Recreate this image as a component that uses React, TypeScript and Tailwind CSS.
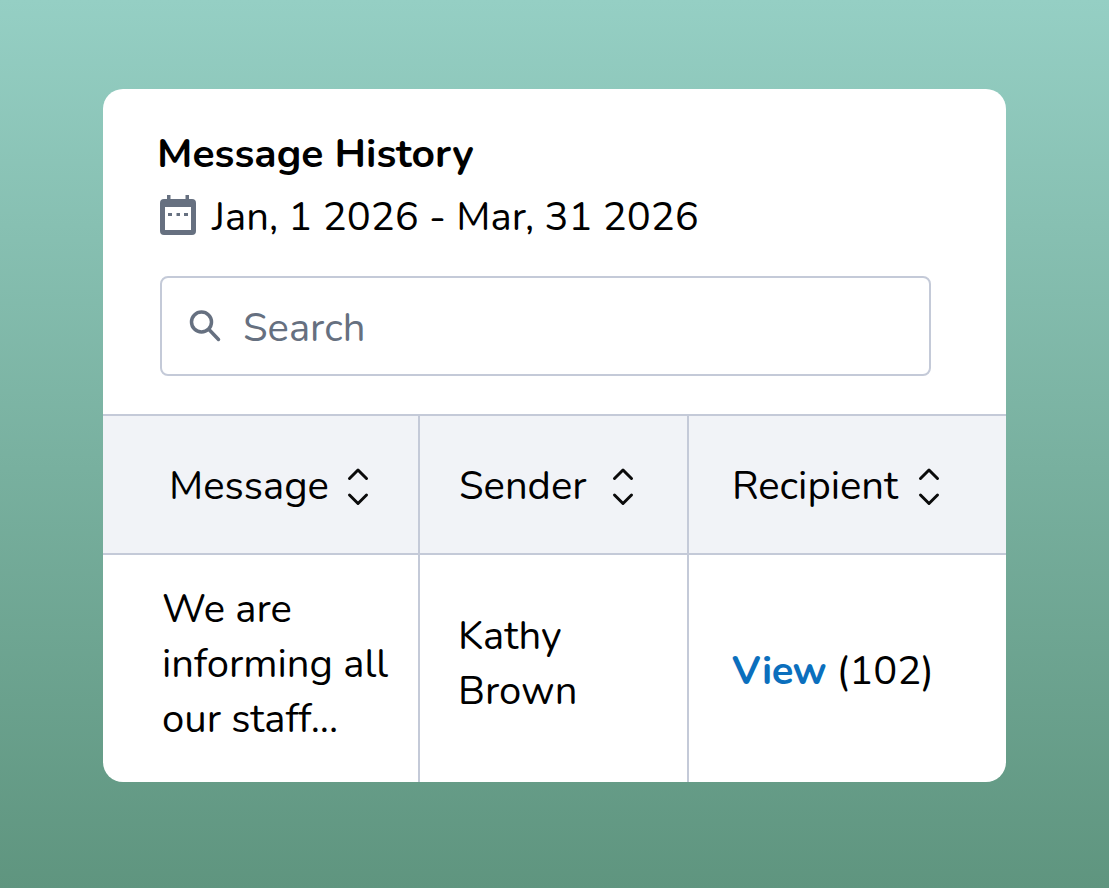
import React from "react";

const Sort = () => (
  <svg width="24" height="40" viewBox="0 0 24 40" fill="none" stroke="#0b0b0b" strokeWidth="3" strokeLinecap="round" strokeLinejoin="round" className="shrink-0 mt-[3px]">
    <path d="M3.500 11.500 L12 3 L20.500 11.500" />
    <path d="M3.500 28 L12 36.500 L20.500 28" />
  </svg>
);

const Calendar = () => (
  <svg width="36" height="40" viewBox="0 0 36 40" className="shrink-0 mb-[4px]">
    <path fill="#667080" fillRule="evenodd" d="M7 0h3.500v4h15V0H29v4h3a4 4 0 0 1 4 4v28a4 4 0 0 1-4 4H4a4 4 0 0 1-4-4V8a4 4 0 0 1 4-4h3zM5 12v23h26V12z" />
    <rect x="8" y="18" width="4" height="3" fill="#667080" />
    <rect x="16.500" y="18" width="3.500" height="3" fill="#667080" />
    <rect x="24" y="18" width="4" height="3" fill="#667080" />
  </svg>
);

const Search = () => (
  <svg width="32" height="32" viewBox="0 0 32 32" fill="none" stroke="#667080" strokeWidth="3.500" strokeLinecap="round" className="shrink-0">
    <circle cx="12.500" cy="12" r="10" />
    <path d="M20 19.500 L29.500 29.500" />
  </svg>
);

export default function App() {
  return (
    <div className="h-[888px] w-full flex justify-center items-start pt-[89px] bg-gradient-to-b from-[#95cfc4] to-[#5f957f] font-['Nunito','Noto_Sans','Lato',sans-serif] text-black">
      <div className="w-[903px] h-[693px] bg-white rounded-[20px] overflow-hidden flex flex-col">
        <div className="h-[325px] shrink-0 pl-[54px] pr-[75px] pt-[40px] flex flex-col">
          <h1 className="text-[40.800px] leading-[50px] font-bold">Message History</h1>
          <div className="mt-[13px] flex items-center gap-[16px] text-[40px] leading-[50px] pl-[3px]">
            <Calendar />
            <span>Jan, 1 2026 - Mar, 31 2026</span>
          </div>
          <div className="mt-[34px] h-[100px] ml-[3px] border-2 border-[#c4cad8] rounded-[8px] flex items-center pl-[27px] gap-[22px] text-[40px] text-[#667080]">
            <Search />
            <span className="pt-[4px]">Search</span>
          </div>
        </div>
        <div className="grid grid-cols-[317px_269px_1fr] grid-rows-[139px_1fr] flex-1 border-t-2 border-[#c4cad8]">
          <div className="bg-[#f1f3f7] border-b-2 border-r-2 border-[#c4cad8] flex items-center pl-[66px] pt-[2px] gap-[17px] text-[40px]">
            <span>Message</span><Sort />
          </div>
          <div className="bg-[#f1f3f7] border-b-2 border-r-2 border-[#c4cad8] flex items-center pl-[39px] pt-[2px] gap-[24px] text-[40px]">
            <span>Sender</span><Sort />
          </div>
          <div className="bg-[#f1f3f7] border-b-2 border-[#c4cad8] flex items-center pl-[43px] pt-[2px] gap-[19px] text-[40px]">
            <span>Recipient</span><Sort />
          </div>
          <div className="border-r-2 border-[#c4cad8] flex items-center pl-[59px] pb-[9px] text-[40px] leading-[55px]">
            <span>We are<br />informing all<br />our staff...</span>
          </div>
          <div className="border-r-2 border-[#c4cad8] flex items-center pl-[38px] pb-[9px] text-[40px] leading-[55px]">
            <span>Kathy<br />Brown</span>
          </div>
          <div className="flex items-center pl-[43px] pt-[5px] text-[40px]">
            <span><span className="font-bold tracking-[-0.5px] text-[#0b6fbd]">View</span> (102)</span>
          </div>
        </div>
      </div>
    </div>
  );
}
